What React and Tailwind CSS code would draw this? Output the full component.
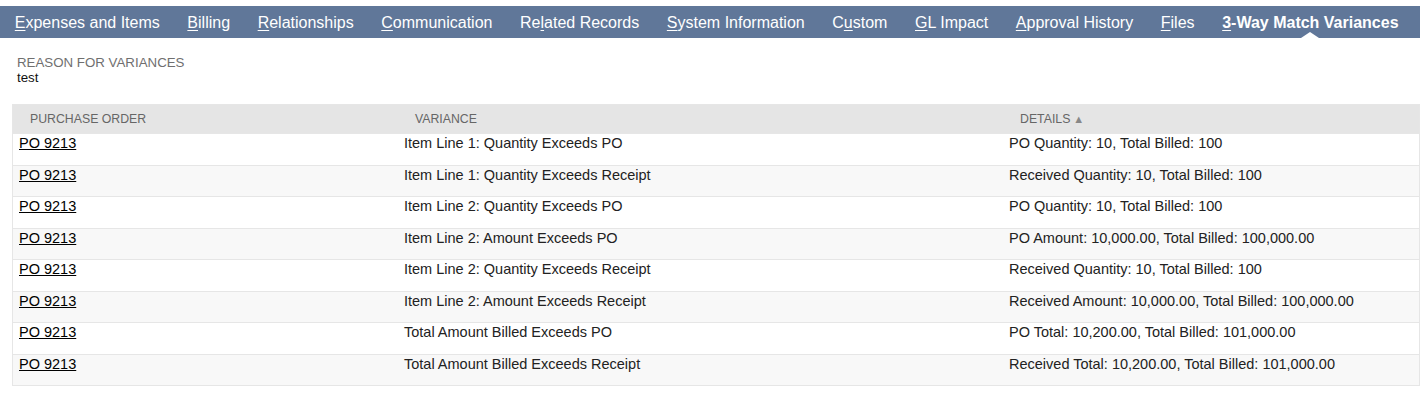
const tabs = [
  { pre: '', key: 'E', post: 'xpenses and Items' },
  { pre: '', key: 'B', post: 'illing' },
  { pre: '', key: 'R', post: 'elationships' },
  { pre: '', key: 'C', post: 'ommunication' },
  { pre: 'Re', key: 'l', post: 'ated Records' },
  { pre: '', key: 'S', post: 'ystem Information' },
  { pre: 'C', key: 'u', post: 'stom' },
  { pre: '', key: 'G', post: 'L Impact' },
  { pre: '', key: 'A', post: 'pproval History' },
  { pre: '', key: 'F', post: 'iles' },
  { pre: '', key: '3', post: '-Way Match Variances', active: true },
];

const rows = [
  ['Item Line 1: Quantity Exceeds PO', 'PO Quantity: 10, Total Billed: 100'],
  ['Item Line 1: Quantity Exceeds Receipt', 'Received Quantity: 10, Total Billed: 100'],
  ['Item Line 2: Quantity Exceeds PO', 'PO Quantity: 10, Total Billed: 100'],
  ['Item Line 2: Amount Exceeds PO', 'PO Amount: 10,000.00, Total Billed: 100,000.00'],
  ['Item Line 2: Quantity Exceeds Receipt', 'Received Quantity: 10, Total Billed: 100'],
  ['Item Line 2: Amount Exceeds Receipt', 'Received Amount: 10,000.00, Total Billed: 100,000.00'],
  ['Total Amount Billed Exceeds PO', 'PO Total: 10,200.00, Total Billed: 101,000.00'],
  ['Total Amount Billed Exceeds Receipt', 'Received Total: 10,200.00, Total Billed: 101,000.00'],
];

export default function App() {
  return (
    <div className="bg-white pt-[6px] font-['Liberation_Sans',Arial,sans-serif]">
      {/* subtabs */}
      <div className="mr-px flex h-[32px] items-stretch bg-[#607799] pl-px">
        {tabs.map((t) => (
          <div
            key={t.post}
            className={
              'relative flex items-center px-[13.8px] pt-px text-[16px] text-white ' +
              (t.active ? 'font-bold' : '')
            }
          >
            <span>
              {t.pre}
              <span className="underline underline-offset-2">{t.key}</span>
              {t.post}
            </span>
            {t.active && (
              <span className="absolute bottom-0 left-1/2 h-0 w-0 -translate-x-1/2 border-x-[9px] border-b-[6px] border-x-transparent border-b-white" />
            )}
          </div>
        ))}
      </div>

      {/* reason */}
      <div className="mt-4 pl-[17px] text-[13.3px] leading-[15px]">
        <div className="pt-px uppercase text-[#6f6f6f]">Reason for Variances</div>
        <div className="text-[#111]">test</div>
      </div>

      {/* variances table */}
      <div className="mt-[19px] ml-3 mr-px border border-[#e6e6e6]">
        <div className="grid h-[28px] grid-cols-[384px_605px_1fr] items-center bg-[#e5e5e5] text-[12.3px] uppercase text-[#666]">
          <div className="pl-[17px]">Purchase Order</div>
          <div className="pl-[18px]">Variance</div>
          <div className="flex items-center gap-[3px] pl-[18px]">
            Details
            <span className="text-[11px] leading-none text-[#888]">▲</span>
          </div>
        </div>
        {rows.map((r, i) => (
          <div
            key={i}
            className={
              'grid h-[31.5px] grid-cols-[384px_605px_1fr] border-t border-[#e6e6e6] text-[14.5px] leading-[18px] text-[#222] ' +
              (i % 2 ? 'bg-[#f8f8f8]' : 'bg-white')
            }
          >
            <div className="pl-[6px]">
              <a href="#" className="text-black underline">PO 9213</a>
            </div>
            <div className="pl-[7px]">{r[0]}</div>
            <div className="pl-[7px]">{r[1]}</div>
          </div>
        ))}
      </div>
    </div>
  );
}
